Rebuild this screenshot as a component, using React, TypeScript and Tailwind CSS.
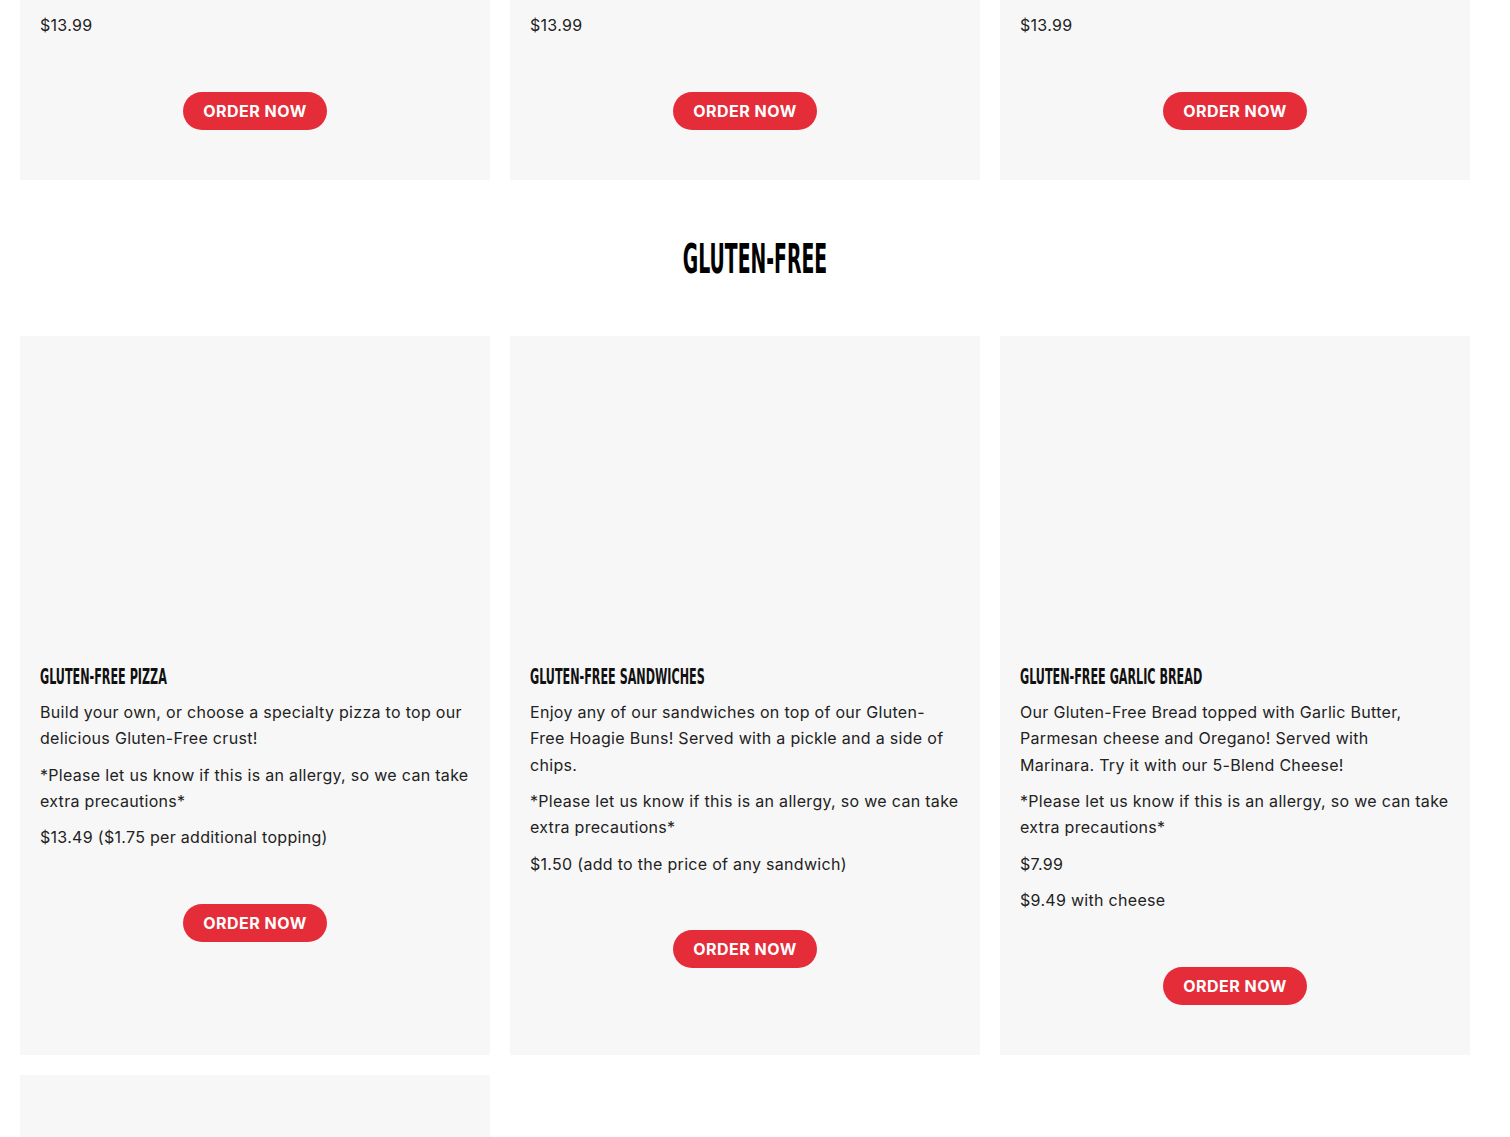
const body = { fontFamily: 'Inter, "Open Sans", sans-serif' }
const cond = { fontFamily: '"Liberation Sans Narrow", "DejaVu Sans Condensed", "Liberation Sans", sans-serif' }

type Item = {
  title?: string
  lines: string[]
}

// line breaks follow the original menu layout
const topRow: Item[] = [
  { lines: ['Pizza', '$13.99'] },
  { lines: ['Served with a side of our house marinara', '$13.99'] },
  { lines: ['Served with a side of ranch or marinara', '$13.99'] },
]

const glutenFree: Item[] = [
  {
    title: 'Gluten-Free Pizza',
    lines: [
      'Build your own, or choose a specialty pizza to top our\ndelicious Gluten-Free crust!',
      '*Please let us know if this is an allergy, so we can take\nextra precautions*',
      '$13.49 ($1.75 per additional topping)',
    ],
  },
  {
    title: 'Gluten-Free Sandwiches',
    lines: [
      'Enjoy any of our sandwiches on top of our Gluten-\nFree Hoagie Buns! Served with a pickle and a side of\nchips.',
      '*Please let us know if this is an allergy, so we can take\nextra precautions*',
      '$1.50 (add to the price of any sandwich)',
    ],
  },
  {
    title: 'Gluten-Free Garlic Bread',
    lines: [
      'Our Gluten-Free Bread topped with Garlic Butter,\nParmesan cheese and Oregano! Served with\nMarinara. Try it with our 5-Blend Cheese!',
      '*Please let us know if this is an allergy, so we can take\nextra precautions*',
      '$7.99',
      '$9.49 with cheese',
    ],
  },
]

function OrderButton() {
  return (
    <div className="mt-[53px] flex justify-center">
      <a
        href="#"
        className="inline-flex h-[38px] items-center rounded-full bg-[#e52d39] px-5 text-[16px] font-bold uppercase tracking-[0.5px] text-white"
      >
        Order Now
      </a>
    </div>
  )
}

function MenuCard({ item, image = true }: { item: Item; image?: boolean }) {
  return (
    <div className="bg-[#f7f7f7] px-5 pt-5 pb-[50px]">
      {image && <div className="h-[308px]" />}
      {item.title && (
        <h3
          className="mb-[9px] origin-left scale-x-[0.565] whitespace-nowrap text-[22px] leading-[26px] font-bold uppercase text-[#111]"
          style={cond}
        >
          {item.title}
        </h3>
      )}
      <div className="flex flex-col gap-[10px]">
        {item.lines.map((l, i) => (
          <p key={i} className="whitespace-pre-line text-[16px] leading-[1.65] tracking-[0.3px] text-[#222]">
            {l}
          </p>
        ))}
      </div>
      <OrderButton />
    </div>
  )
}

export default function App() {
  return (
    <div className="min-h-screen overflow-hidden bg-white" style={body}>
      <div className="w-[1490px] pl-5">
        <div className="-mt-[44px] grid w-[1450px] grid-cols-3 gap-5">
          {topRow.map((it, i) => (
            <MenuCard key={i} item={it} image={false} />
          ))}
        </div>

        <h2
          className="mt-[56px] mb-[54px] scale-x-[0.51] text-center text-[41px] leading-[46px] font-bold uppercase text-black"
          style={cond}
        >
          Gluten-Free
        </h2>

        <div className="grid w-[1450px] grid-cols-3 gap-5">
          {glutenFree.map((it, i) => (
            <MenuCard key={i} item={it} />
          ))}
        </div>

        <div className="mt-5 grid w-[1450px] grid-cols-3 gap-5">
          <div className="h-[400px] bg-[#f7f7f7]" />
        </div>
      </div>
    </div>
  )
}
